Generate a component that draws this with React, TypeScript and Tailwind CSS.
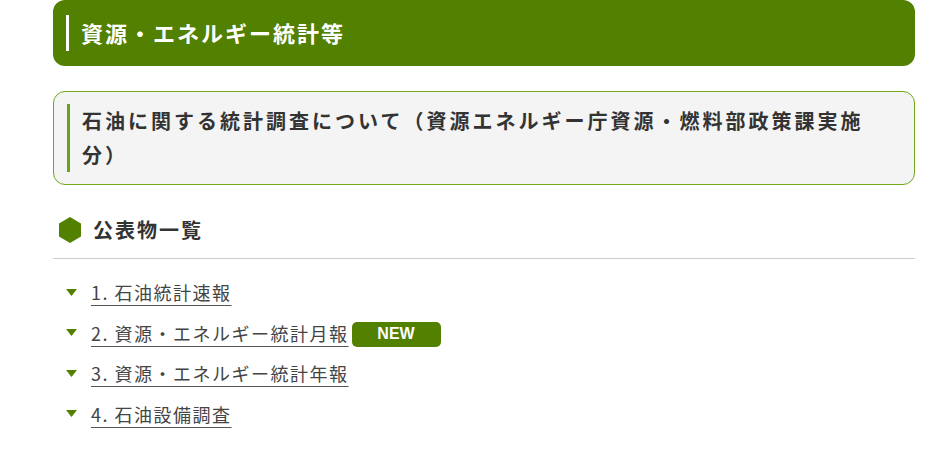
import React from "react";

const ITEMS = [
  { id: 1, label: "1. 石油統計速報", isNew: false },
  { id: 2, label: "2. 資源・エネルギー統計月報", isNew: true },
  { id: 3, label: "3. 資源・エネルギー統計年報", isNew: false },
  { id: 4, label: "4. 石油設備調査", isNew: false },
];

const font = { fontFamily: '"Noto Sans CJK JP", "Noto Sans", sans-serif' };

export default function App() {
  return (
    <div className="w-[950px] h-[455px] bg-white overflow-hidden" style={font}>
      <div className="ml-[53px] w-[862px]">
        {/* page title */}
        <div className="h-[66px] bg-[#528000] rounded-[12px] flex items-center pl-[13px]">
          <div className="w-[3px] h-[36px] bg-white" />
          <h1 className="ml-[12px] -mt-[3px] text-white text-[22px] tracking-[2px] font-bold leading-none">資源・エネルギー統計等</h1>
        </div>

        {/* section title */}
        <div className="mt-[25px] border border-[#72a81e] bg-[#f4f4f4] rounded-[12px] pl-[13px] pr-[40px] py-[12px]">
          <div className="border-l-[3px] border-[#6aa31a] pl-[12px]">
            <h2 className="text-[20px] tracking-[3px] font-bold leading-[34px] text-[#333]">
              石油に関する統計調査について（資源エネルギー庁資源・燃料部政策課実施分）
            </h2>
          </div>
        </div>

        {/* list heading */}
        <div className="mt-[32px] flex items-center pl-[6px] pb-[15px] border-b border-[#cccccc]">
          <svg width="22" height="26" viewBox="0 0 22 26" className="shrink-0">
            <polygon points="11,0 22,6.5 22,19.5 11,26 0,19.5 0,6.5" fill="#528000" />
          </svg>
          <span className="ml-[12px] text-[20px] tracking-[2px] font-bold leading-none text-[#333]">公表物一覧</span>
        </div>

        <ul className="mt-[13px] pl-[13px]">
          {ITEMS.map((item) => (
            <li key={item.id} className="flex items-center h-[40.5px]">
              <svg width="11" height="7" viewBox="0 0 11 7" className="shrink-0">
                <polygon points="0,0 11,0 5.5,7" fill="#528000" />
              </svg>
              <a href="#" className="ml-[14px] text-[18px] tracking-[1.5px] leading-none text-[#444] underline underline-offset-[5px] decoration-[#555]">
                {item.label}
              </a>
              {item.isNew && (
                <span className="ml-[3px] mt-[3px] w-[89px] h-[25px] bg-[#528000] rounded-[5px] text-white text-[16px] font-bold flex items-center justify-center" style={{ fontFamily: '"Liberation Sans", Arial, sans-serif' }}>
                  NEW
                </span>
              )}
            </li>
          ))}
        </ul>
      </div>
    </div>
  );
}
